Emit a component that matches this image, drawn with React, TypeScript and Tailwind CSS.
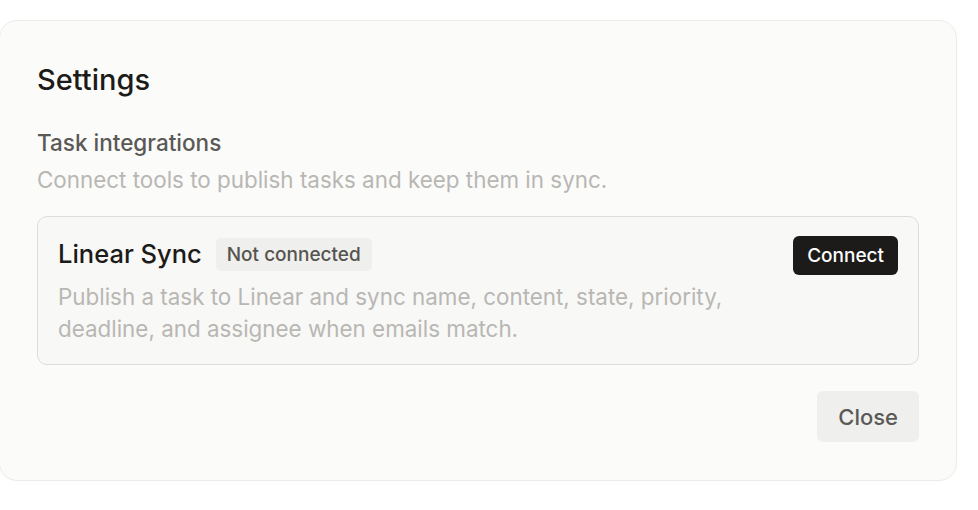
export default function App() {
  return (
    <div className="min-h-[510px] bg-white font-['Inter',sans-serif] pt-[20px]">
      <div className="ml-[-1px] w-[958px] rounded-[18px] border border-[#ebebe8] bg-[#fbfbfa] px-[37px] pt-[41px] pb-[38px]">
        <h1 className="text-[29px] leading-[36px] font-medium text-[#1c1b19]">Settings</h1>

        <div className="mt-[30px]">
          <h2 className="text-[22.5px] leading-[30px] font-medium text-[#5a5955]">Task integrations</h2>
          <p className="mt-[7px] text-[22.4px] leading-[30px] text-[#b8b7b3]">
            Connect tools to publish tasks and keep them in sync.
          </p>
        </div>

        <div className="mt-[21px] rounded-[10px] border border-[#dedddb] bg-[#f8f8f7] px-[20px] pt-[20px] pb-[19px]">
          <div className="flex items-start justify-between gap-4">
            <div className="min-w-0">
              <div className="flex items-center gap-[14px]">
                <span className="text-[25.5px] leading-[34px] font-medium text-[#1c1b19]">Linear Sync</span>
                <span className="rounded-[5px] bg-[#efefed] px-[11px] py-[4px] text-[19px] leading-[25px] font-medium text-[#55544f]">
                  Not connected
                </span>
              </div>
              <p className="mt-[10px] text-[22.4px] leading-[32px] text-[#b8b7b3]">
                Publish a task to Linear and sync name, content, state, priority, deadline, and assignee when emails match.
              </p>
            </div>
            <button className="mt-[-1px] shrink-0 rounded-[6px] bg-[#1c1b19] px-[14px] py-[7px] text-[19px] leading-[25px] font-medium text-white">
              Connect
            </button>
          </div>
        </div>

        <div className="mt-[26px] flex justify-end">
          <button className="rounded-[6px] bg-[#efefed] px-[21px] py-[12.5px] text-[22px] leading-[26px] font-medium text-[#5a5955]">
            Close
          </button>
        </div>
      </div>
    </div>
  );
}
